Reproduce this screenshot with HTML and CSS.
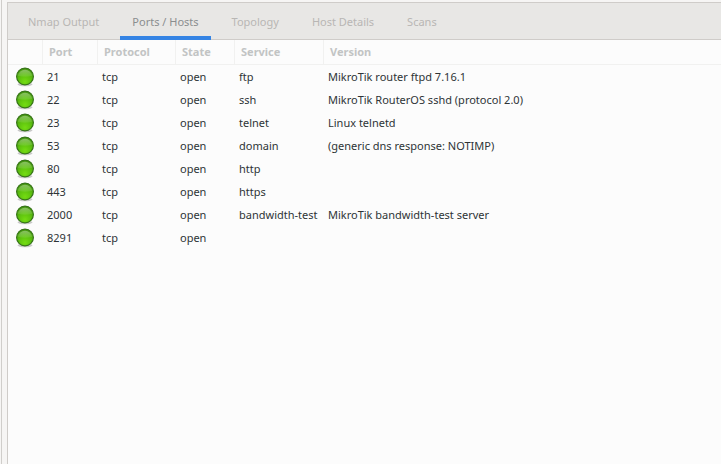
FILE: index.html
```
<!DOCTYPE html>
<html lang="en-US">
<head>
<meta charset="utf-8">
<meta name="viewport" content="width=device-width, initial-scale=1">
<title>Ports / Hosts</title>
<link rel="stylesheet" href="styles.css">
</head>
<body>

<svg class="defs" aria-hidden="true">
  <radialGradient id="ball" cx="0.5" cy="0.8" r="0.8">
    <stop offset="0" stop-color="#74dc12"/>
    <stop offset="0.5" stop-color="#5cc00e"/>
    <stop offset="1" stop-color="#429012"/>
  </radialGradient>
  <linearGradient id="shine" x1="0" y1="0" x2="0" y2="1">
    <stop offset="0" stop-color="#fff" stop-opacity="0.35"/>
    <stop offset="1" stop-color="#fff" stop-opacity="0.08"/>
  </linearGradient>
  <symbol id="open" viewBox="0 0 20 20">
    <ellipse cx="10" cy="17.3" rx="7.5" ry="2" fill="#000" opacity="0.2"/>
    <circle cx="10" cy="9.5" r="8.4" fill="url(#ball)" stroke="#38751a" stroke-width="1.2"/>
    <path d="M2.8 8.8a7.3 7.3 0 0 1 14.4 0q-7.2 2-14.4 0z" fill="url(#shine)"/>
  </symbol>
</svg>

<div class="pane">
  <div class="notebook">
    <div class="tabs" role="tablist">
      <button class="tab" role="tab" type="button">Nmap Output</button>
      <button class="tab active" role="tab" type="button" aria-selected="true">Ports / Hosts</button>
      <button class="tab" role="tab" type="button">Topology</button>
      <button class="tab" role="tab" type="button">Host Details</button>
      <button class="tab" role="tab" type="button">Scans</button>
    </div>

    <table class="ports">
      <colgroup>
        <col class="col-icon">
        <col class="col-port">
        <col class="col-protocol">
        <col class="col-state">
        <col class="col-service">
        <col>
      </colgroup>
      <thead>
        <tr><th></th><th>Port</th><th>Protocol</th><th>State</th><th>Service</th><th>Version</th></tr>
      </thead>
      <tbody>
        <tr><td><svg class="icon"><use href="#open"/></svg></td><td>21</td><td>tcp</td><td>open</td><td>ftp</td><td>MikroTik router ftpd 7.16.1</td></tr>
        <tr><td><svg class="icon"><use href="#open"/></svg></td><td>22</td><td>tcp</td><td>open</td><td>ssh</td><td>MikroTik RouterOS sshd (protocol 2.0)</td></tr>
        <tr><td><svg class="icon"><use href="#open"/></svg></td><td>23</td><td>tcp</td><td>open</td><td>telnet</td><td>Linux telnetd</td></tr>
        <tr><td><svg class="icon"><use href="#open"/></svg></td><td>53</td><td>tcp</td><td>open</td><td>domain</td><td>(generic dns response: NOTIMP)</td></tr>
        <tr><td><svg class="icon"><use href="#open"/></svg></td><td>80</td><td>tcp</td><td>open</td><td>http</td><td></td></tr>
        <tr><td><svg class="icon"><use href="#open"/></svg></td><td>443</td><td>tcp</td><td>open</td><td>https</td><td></td></tr>
        <tr><td><svg class="icon"><use href="#open"/></svg></td><td>2000</td><td>tcp</td><td>open</td><td>bandwidth-test</td><td>MikroTik bandwidth-test server</td></tr>
        <tr><td><svg class="icon"><use href="#open"/></svg></td><td>8291</td><td>tcp</td><td>open</td><td></td><td></td></tr>
      </tbody>
    </table>
  </div>
</div>

</body>
</html>
```

FILE: styles.css
```
* {
  box-sizing: border-box;
}
body {
  margin: 0;
  background: #f6f5f4;
  font-family: "Noto Sans", "Open Sans", sans-serif;
  font-size: 11px;
  color: #2e3436;
}
.defs {
  position: absolute;
  width: 0;
  height: 0;
}
.pane {
  display: flex;
  min-height: 100vh;
  margin-left: 1px;
  padding: 2px 0 0 5px;
  border-left: 1px solid #d0cecb;
}
.notebook {
  flex: 1;
  border: 1px solid #cfccc9;
  border-width: 1px 0 0 1px;
  background: #fcfcfc;
}
.tabs {
  display: flex;
  gap: 9px;
  padding: 0 8px;
  background: #e8e7e5;
  border-bottom: 1px solid #cfccc9;
}
.tab {
  height: 37px;
  margin-bottom: -1px;
  padding: 4px 12px 0;
  border: 0;
  border-bottom: 4px solid transparent;
  background: none;
  font-family: inherit;
  font-size: 11px;
  color: #b8b6b4;
  white-space: nowrap;
}
.tab.active {
  color: #8b8e8f;
  border-bottom-color: #3584e4;
}
.ports {
  width: 100%;
  table-layout: fixed;
  border-collapse: separate;
  border-spacing: 0;
}
.col-icon { width: 35px; }
.col-port { width: 55px; }
.col-protocol { width: 78px; }
.col-state { width: 59px; }
.col-service { width: 89px; }
th {
  height: 25px;
  padding: 0 6px 1px;
  border-right: 1px solid #f1f1f0;
  border-bottom: 1px solid #f1f1f0;
  font-size: 11px;
  color: #c2c4c4;
  text-align: left;
}
th:last-child {
  border-right: 0;
}
td {
  height: 23px;
  padding: 0 4px;
  white-space: nowrap;
}
td:first-child {
  padding: 0 7px;
}
.icon {
  display: block;
  width: 20px;
  height: 20px;
}
```
